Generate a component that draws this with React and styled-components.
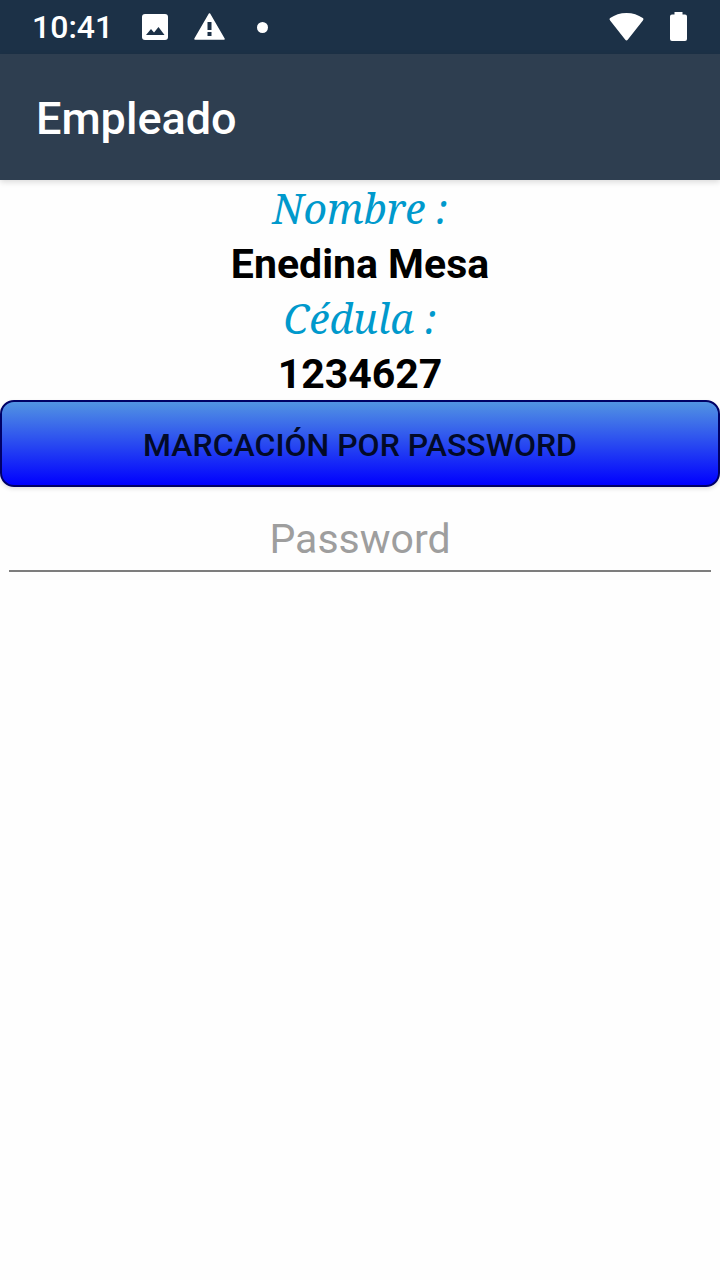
import React, { useState } from 'react';
import styled, { createGlobalStyle } from 'styled-components';

const employee = {
  name: 'Enedina Mesa',
  idNumber: '1234627',
};

const App = () => {
  const [password, setPassword] = useState('');

  const handleSubmit = (event) => {
    event.preventDefault();
    setPassword('');
  };

  return (
    <>
      <GlobalStyle />
      <Screen>
        <StatusBar>
          <StatusGroup>
            <Clock>10:41</Clock>
            <ImageIcon />
            <WarningIcon />
            <MoreDot />
          </StatusGroup>
          <StatusGroup>
            <WifiIcon />
            <BatteryIcon />
          </StatusGroup>
        </StatusBar>

        <AppBar>
          <Title>Empleado</Title>
        </AppBar>

        <Content>
          <Details>
            <Label>Nombre :</Label>
            <Value>{employee.name}</Value>
            <Label>Cédula :</Label>
            <Value>{employee.idNumber}</Value>
          </Details>

          <Form onSubmit={handleSubmit}>
            <SubmitButton type="submit">MARCACIÓN POR PASSWORD</SubmitButton>
            <PasswordField>
              <PasswordInput
                type="password"
                placeholder="Password"
                aria-label="Password"
                value={password}
                onChange={(event) => setPassword(event.target.value)}
              />
            </PasswordField>
          </Form>
        </Content>
      </Screen>
    </>
  );
};

const ImageIcon = () => (
  <svg width="26" height="26" viewBox="0 0 26 26" aria-hidden="true">
    <rect width="26" height="26" rx="3" fill="#fff" />
    <path d="M4 21L9 15L12 18.5L16.5 13L22.5 21Z" fill="#1c3147" />
  </svg>
);

const WarningIcon = () => (
  <svg width="31" height="28" viewBox="0 0 31 28" aria-hidden="true">
    <path d="M15.5 1L30 26H1Z" fill="#fff" stroke="#fff" strokeWidth="1.5" strokeLinejoin="round" />
    <path d="M13.5 9h4v8h-4zM13.5 19h4v4h-4z" fill="#1c3147" />
  </svg>
);

const WifiIcon = () => (
  <svg width="35" height="28" viewBox="0 0 35 28" aria-hidden="true">
    <path
      d="M1.1 7.4C.3 6.7.4 5.7 1.2 5.1C5.8 1.8 11.3 0 17.5 0S29.2 1.8 33.8 5.1C34.6 5.7 34.7 6.7 33.9 7.4L18.7 26.8C18 27.6 17 27.6 16.3 26.8Z"
      fill="#fff"
    />
  </svg>
);

const BatteryIcon = () => (
  <svg width="17" height="30" viewBox="0 0 17 30" aria-hidden="true">
    <path
      d="M4.500 0H12.500V2.500H15A2 2 0 0 1 17 4.500V27A2 2 0 0 1 15 29H2A2 2 0 0 1 0 27V4.500A2 2 0 0 1 2 2.500H4.500Z"
      fill="#fff"
    />
  </svg>
);

const GlobalStyle = createGlobalStyle`
  * {
    box-sizing: border-box;
  }

  body {
    margin: 0;
    background: #fefefe;
    font-family: Roboto, sans-serif;
  }
`;

const Screen = styled.div`
  display: flex;
  flex-direction: column;
  min-height: 100vh;
`;

const StatusBar = styled.div`
  display: flex;
  align-items: center;
  justify-content: space-between;
  height: 54px;
  padding: 0 33px 0 32px;
  background: #1c3147;
`;

const StatusGroup = styled.div`
  display: flex;
  align-items: center;
  gap: 26px;
`;

const Clock = styled.span`
  margin-right: 3px;
  color: #fff;
  font-size: 32px;
  font-weight: 500;
  line-height: 54px;
`;

const MoreDot = styled.span`
  width: 11px;
  height: 11px;
  margin-left: 6px;
  border-radius: 50%;
  background: #fff;
`;

const AppBar = styled.header`
  display: flex;
  align-items: center;
  height: 126px;
  padding: 2px 36px 0;
  background: #2e3e50;
  box-shadow: 0 2px 6px rgba(0, 0, 0, 0.15);
`;

const Title = styled.h1`
  margin: 0;
  color: #fff;
  font-size: 45px;
  font-weight: 500;
`;

const Content = styled.main`
  flex: 1;
`;

const Details = styled.dl`
  margin: 0;
  text-align: center;
  font-size: 41px;
`;

const Label = styled.dt`
  padding-top: 1px;
  color: #0099cc;
  font-family: 'Noto Serif', 'Droid Serif', 'Liberation Serif', serif;
  font-style: italic;
  line-height: 54px;
`;

const Value = styled.dd`
  margin: 0;
  padding-top: 3px;
  color: #000;
  font-weight: 700;
  line-height: 52px;
`;

const Form = styled.form`
  display: flex;
  flex-direction: column;
`;

const SubmitButton = styled.button`
  height: 87px;
  padding: 2px 0 0;
  border: 2px solid #000066;
  border-radius: 14px;
  background: linear-gradient(#5294e2, #0000ff);
  box-shadow: 0 2px 4px rgba(0, 0, 0, 0.12);
  color: #020a28;
  font-family: inherit;
  font-size: 32px;
  font-weight: 500;
  cursor: pointer;
`;

const PasswordField = styled.div`
  display: flex;
  padding: 20px 9px;
`;

const PasswordInput = styled.input`
  flex: 1;
  min-width: 0;
  height: 65px;
  padding: 0;
  border: 0;
  border-bottom: 2px solid #7d7d7d;
  background: transparent;
  color: #000;
  font-family: inherit;
  font-size: 41px;
  text-align: center;
  outline: none;

  &::placeholder {
    color: #9e9e9e;
    opacity: 1;
  }
`;

export default App;
